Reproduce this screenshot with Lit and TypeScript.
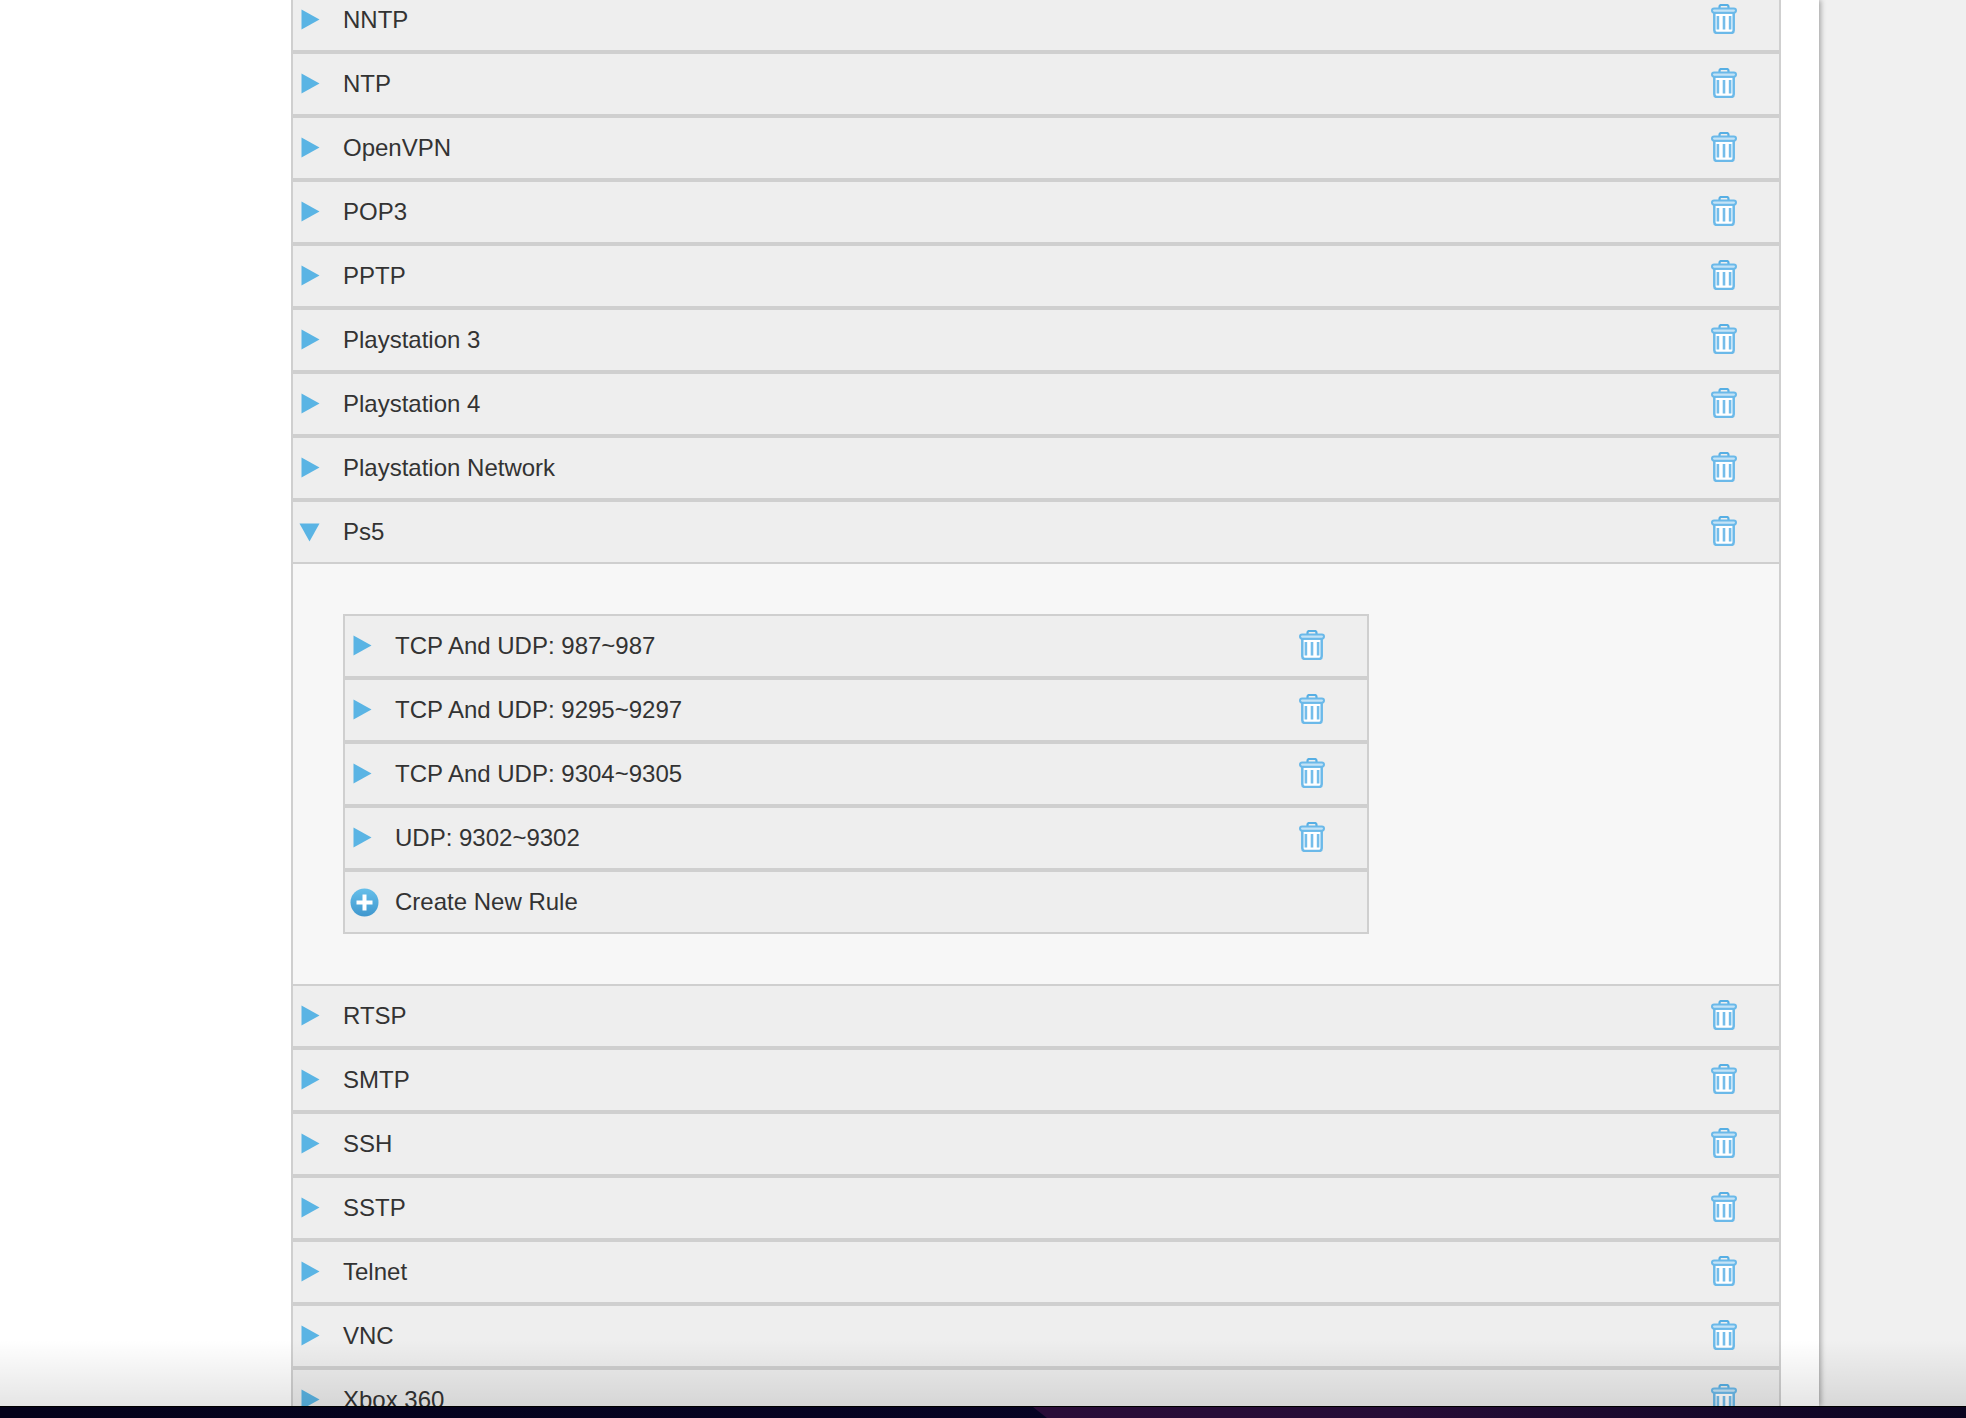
import { LitElement, html, css } from "lit";
import { customElement } from "lit/decorators.js";

const trash = html`<svg class="trash" width="26" height="30" viewBox="0 0 26 30" fill="none">
  <path d="M8.500 5V2.800C8.500 1.700 9.200 1 10.200 1h5.600c1 0 1.700.7 1.700 1.800V5" stroke="#57afe4" stroke-width="2.200"/>
  <path d="M3.300 8.500V26.200c0 1.800 1.200 2.800 3 2.800h13.400c1.800 0 3-1 3-2.800V8.500Z" fill="#fff" stroke="#6bb9e9" stroke-width="2.500"/>
  <rect x="1" y="4.500" width="24" height="4.200" rx="2.100" fill="#c4e3f6" stroke="#6bb9e9" stroke-width="2"/>
  <path d="M6.900 12v13.500M13 12v13.500M19.100 12v13.500" stroke="#74bdea" stroke-width="2.600"/>
</svg>`;

const right = html`<svg class="tri" width="19" height="21" viewBox="0 0 19 21"><polygon points="0.500,0.500 18.500,10.500 0.500,20.500" fill="#5ab4e4"/></svg>`;
const down = html`<svg class="tri down" width="21" height="19" viewBox="0 0 21 19"><polygon points="0.500,0.500 20.500,0.500 10.500,18.500" fill="#5ab4e4"/></svg>`;
const plus = html`<svg class="plus" width="29" height="29" viewBox="0 0 29 29">
  <defs><linearGradient id="pg" x1="0" y1="0" x2="0" y2="1"><stop offset="0" stop-color="#66bfea"/><stop offset="1" stop-color="#3f97ce"/></linearGradient></defs>
  <circle cx="14.500" cy="14.500" r="14" fill="url(#pg)"/>
  <path d="M14.500 6.500v16M6.500 14.500h16" stroke="#fff" stroke-width="4"/>
</svg>`;

const before = ["NNTP", "NTP", "OpenVPN", "POP3", "PPTP", "Playstation 3", "Playstation 4", "Playstation Network"];
const after = ["RTSP", "SMTP", "SSH", "SSTP", "Telnet", "VNC", "Xbox 360"];
const rules = ["TCP And UDP: 987~987", "TCP And UDP: 9295~9297", "TCP And UDP: 9304~9305", "UDP: 9302~9302"];

@customElement("app-root")
export class AppRoot extends LitElement {
  static styles = css`
    :host {
      display: flex;
      flex-direction: column;
      position: relative;
      height: 1418px;
      overflow: hidden;
      background: #f0f0f0;
      font-family: "Liberation Sans", Arial, sans-serif;
      color: #333;
    }
    .viewport {
      height: 1406px;
      overflow: hidden;
    }
    .card {
      display: flow-root;
      width: 1819px;
      height: 1406px;
      box-sizing: border-box;
      padding-left: 291px;
      padding-right: 38px;
      background: #fff;
      box-shadow: 2px 0 5px rgba(0, 0, 0, 0.3);
    }
    .list {
      margin-top: -10px;
      border-left: 2px solid #cfcfcf;
      border-right: 2px solid #cfcfcf;
    }
    .row {
      display: flex;
      align-items: center;
      height: 60px;
      background: #eee;
      border-bottom: 4px solid #cfcfcf;
      font-size: 24px;
    }
    .row.open { border-bottom-width: 2px; }
    .slot {
      flex: none;
      width: 50px;
      display: flex;
      align-items: center;
    }
    .tri { display: block; margin: -1px 0 0 8px; }
    .tri.down { margin: 0 0 0 6px; }
    .plus { display: block; margin-left: 5px; }
    .label { flex: 1; }
    .trash { flex: none; display: block; margin-right: 42px; margin-top: -2px; }
    .expand {
      background: #f7f7f7;
      border-bottom: 2px solid #cfcfcf;
      padding: 50px 0 50px 50px;
    }
    .inner {
      width: 1026px;
      box-sizing: border-box;
      border: 2px solid #cfcfcf;
    }
    .inner .row:last-child { border-bottom: none; }
    .fade {
      position: absolute;
      left: 0;
      right: 0;
      top: 1340px;
      height: 66px;
      background: linear-gradient(to bottom, rgba(0, 0, 0, 0), rgba(0, 0, 0, 0.1));
      pointer-events: none;
    }
    .bar {
      flex: none;
      position: relative;
      height: 12px;
      background: linear-gradient(to right, #04021a 0, #070324 60%, #070324 100%);
      border-top: 1px solid #000;
      box-sizing: border-box;
    }
    .bar i {
      position: absolute;
      inset: 0;
      background: linear-gradient(to right, #2a0c38 1040px, #260c36 1400px, #0a0420 1966px);
      clip-path: polygon(1033px 0, 100% 0, 100% 100%, 1047px 100%);
    }
  `;

  private row(name: string, icon = right, open = false) {
    return html`<div class="row ${open ? "open" : ""}">
      <div class="slot">${icon}</div>
      <div class="label">${name}</div>
      ${trash}
    </div>`;
  }

  render() {
    return html`
      <div class="viewport">
        <div class="card">
          <div class="list">
            ${before.map((n) => this.row(n))}
            ${this.row("Ps5", down, true)}
            <div class="expand">
              <div class="inner">
                ${rules.map((n) => this.row(n))}
                <div class="row">
                  <div class="slot">${plus}</div>
                  <div class="label">Create New Rule</div>
                </div>
              </div>
            </div>
            ${after.map((n) => this.row(n))}
          </div>
        </div>
      </div>
      <div class="fade"></div>
      <div class="bar"><i></i></div>
    `;
  }
}
